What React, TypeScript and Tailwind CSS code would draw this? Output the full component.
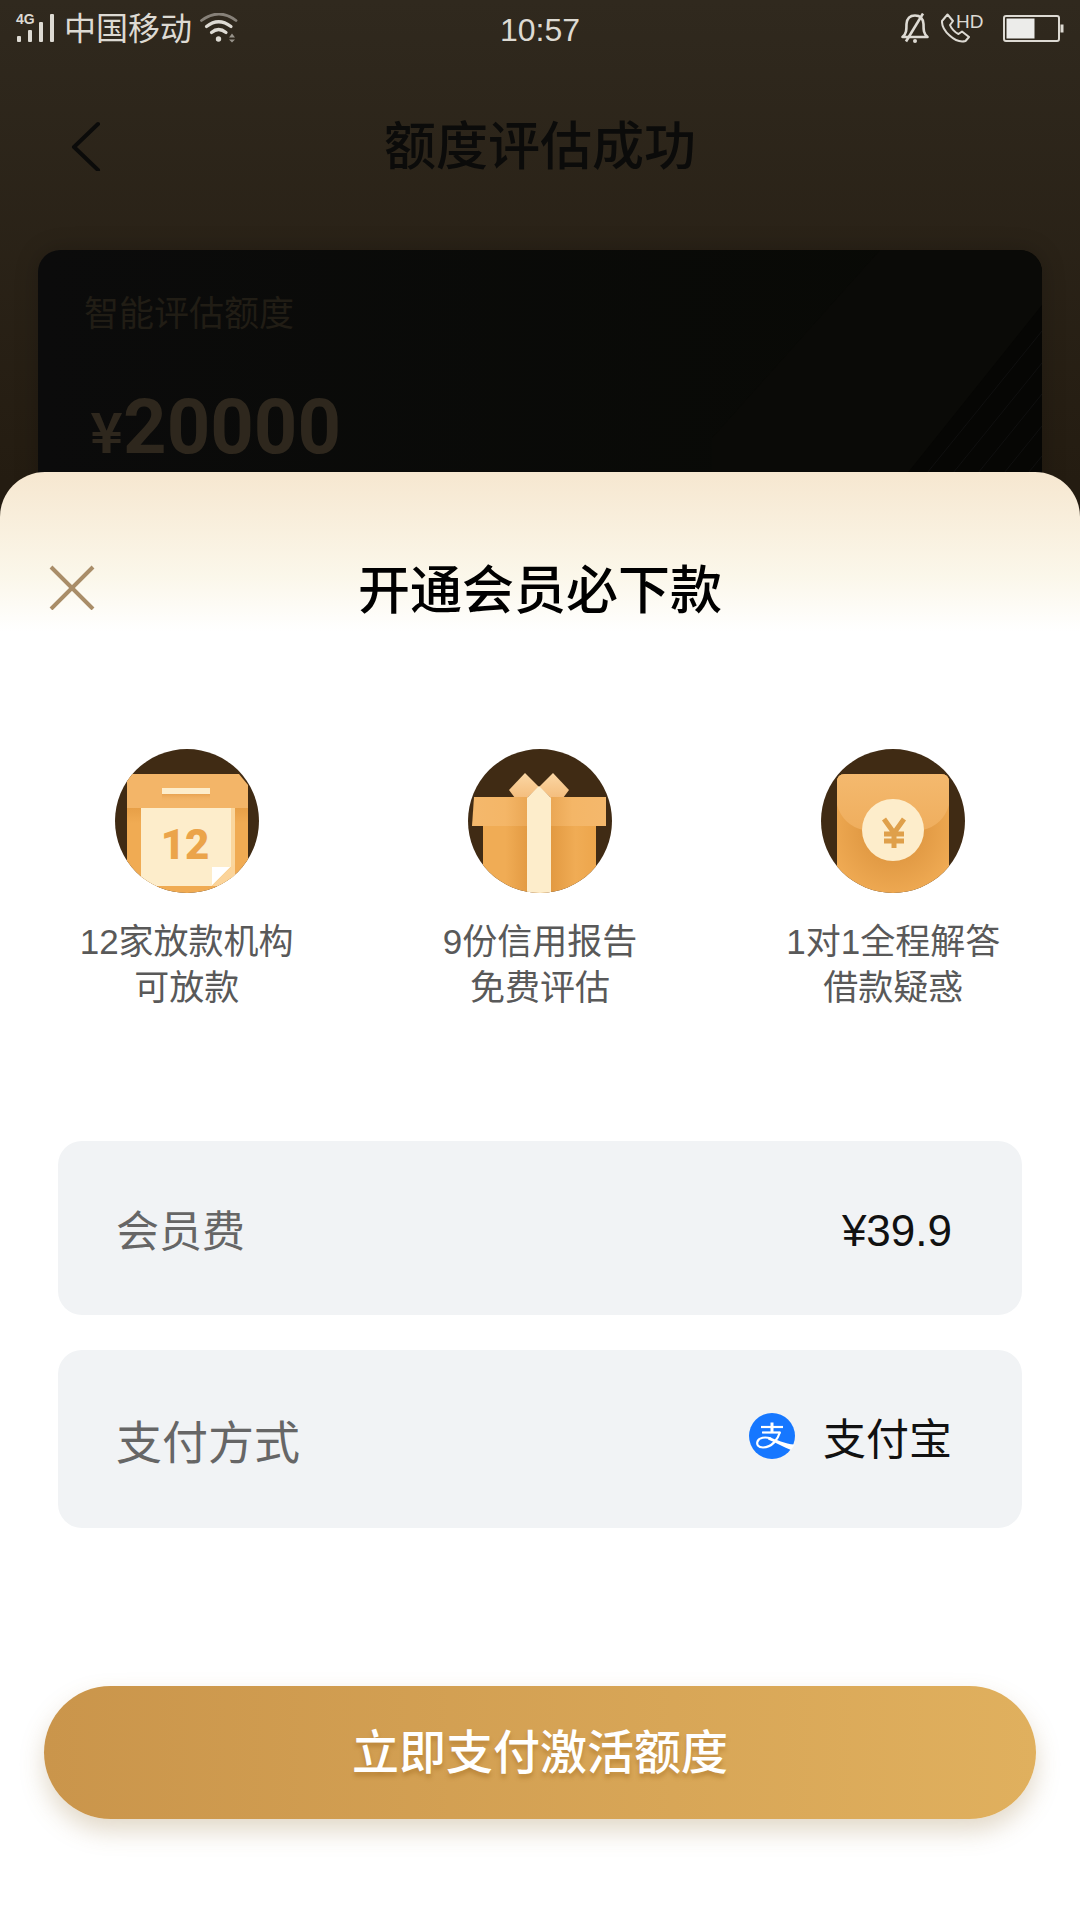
import type { ReactNode } from 'react';

type Benefit = {
  icon: ReactNode;
  lines: [string, string];
};

function SignalIcon() {
  return (
    <div className="relative h-[30px] w-[40px]">
      <span className="absolute -top-px left-0 font-['Liberation_Sans',sans-serif] text-[14px] leading-[14px] font-bold">4G</span>
      <svg width="40" height="30" viewBox="0 0 40 30" fill="currentColor" aria-hidden="true">
        <rect x="1" y="23" width="4" height="6" rx="1" />
        <rect x="12" y="17" width="4" height="12" rx="1" />
        <rect x="23" y="9" width="4" height="20" rx="1" />
        <rect x="34" y="1" width="4" height="28" rx="1" />
      </svg>
    </div>
  );
}

function WifiIcon() {
  return (
    <svg width="38" height="30" viewBox="0 0 38 30" fill="none" stroke="currentColor" strokeLinecap="round" aria-hidden="true">
      <path d="M1.5 7.500 Q19 -5.500 36 7.500" strokeWidth="2.800" opacity="0.5" />
      <path d="M6.500 13.500 Q18.500 4 31 13.500" strokeWidth="3.200" />
      <path d="M11.500 19.500 Q18.500 13.500 26 19.500" strokeWidth="3.200" />
      <circle cx="18.500" cy="26" r="2.700" fill="currentColor" stroke="none" />
      <path d="M29 24.500 L32 20.500 L35 24.500Z M29 26.500 H35 L32 29.500Z" fill="currentColor" stroke="none" opacity="0.6" />
    </svg>
  );
}

function MutedBellIcon() {
  return (
    <svg width="28" height="30" viewBox="0 0 28 30" fill="none" stroke="currentColor" strokeWidth="2.600" strokeLinejoin="round" aria-hidden="true">
      <path d="M1.500 24 H26.500 C22.500 20.500 22.500 17 22.500 11 C22 5 18.500 2.500 14 2.500 C9.500 2.500 6 5 5.500 11 C5.500 17 5.500 20.500 1.500 24 Z" />
      <path d="M22 0.500 L5 28.500" />
      <circle cx="14" cy="28" r="2" fill="currentColor" stroke="none" />
    </svg>
  );
}

function HdCallIcon() {
  return (
    <div className="relative h-[30px] w-[42px]">
      <svg width="30" height="30" viewBox="0 0 30 30" fill="none" stroke="currentColor" strokeWidth="2" strokeLinejoin="round" aria-hidden="true">
        <path d="M6.500 1.500 L12 8 L9 12 C10 15 14 19.500 17.500 21 L21 18.500 L28 24 L24.500 28 C14 31 0.500 17 1 8 Z" />
      </svg>
      <span className="absolute top-0 left-[15px] font-['Liberation_Sans',sans-serif] text-[19px] leading-[18px]">HD</span>
    </div>
  );
}

function BatteryIcon() {
  return (
    <svg width="61" height="27" viewBox="0 0 61 27" fill="none" aria-hidden="true">
      <rect x="1" y="1" width="55" height="25" rx="2" stroke="currentColor" strokeWidth="2" />
      <rect x="3.500" y="3.500" width="28" height="20" fill="#ececea" />
      <rect x="57.500" y="9.500" width="3" height="8" fill="currentColor" />
    </svg>
  );
}

function StatusBar() {
  return (
    <div className="grid h-14 grid-cols-[1fr_auto_1fr] items-center px-4 text-[#dddad3]">
      <div className="flex items-center gap-2">
        <SignalIcon />
        <span className="pb-1 text-[32px] leading-[48px]">中国移动</span>
        <WifiIcon />
      </div>
      <span className="pt-1 font-['Liberation_Sans',sans-serif] text-[32px] leading-[48px]">10:57</span>
      <div className="flex items-center justify-end gap-3">
        <MutedBellIcon />
        <HdCallIcon />
        <div className="ml-2">
          <BatteryIcon />
        </div>
      </div>
    </div>
  );
}

function QuotaCard() {
  return (
    <section className="relative mx-[38px] h-[270px] overflow-hidden rounded-t-[22px] bg-linear-to-r from-[#0b0b0b] to-[#080905] pt-[37px] pl-[46px] shadow-[0_0_24px_rgba(0,0,0,0.2)]">
      <svg className="absolute top-0 right-0" width="330" height="270" viewBox="0 0 330 270" aria-hidden="true">
        <path d="M168 0 H330 V270 H0 V188 Z" fill="#0a0a07" />
        <path d="M330 55 L158 270 H330 Z" fill="#060604" />
        <g stroke="#101010" strokeWidth="1" fill="none">
          <path d="M330 81 L177 270" />
          <path d="M330 113 L203 270" />
          <path d="M330 144 L228 270" />
          <path d="M330 176 L254 270" />
          <path d="M330 206 L278 270" />
        </g>
      </svg>
      <p className="relative text-[35px] leading-[48px] text-[#211d15]">智能评估额度</p>
      <p className="relative mt-[52px] flex items-baseline pl-1.5 text-[#2e271d]">
        <span className="text-[56px] leading-[56px] font-bold">¥</span>
        <span className="font-[Roboto,sans-serif] text-[76px] leading-[80px] font-bold">20000</span>
      </p>
    </section>
  );
}

function CalendarIcon() {
  return (
    <svg width="144" height="144" viewBox="0 0 144 144" aria-hidden="true">
      <defs>
        <clipPath id="calendar-clip">
          <circle cx="72" cy="72" r="72" />
        </clipPath>
        <linearGradient id="calendar-body" x1="0" y1="0" x2="0" y2="1">
          <stop offset="0" stopColor="#e59d45" />
          <stop offset="0.2" stopColor="#f0ab53" />
          <stop offset="1" stopColor="#f0ab53" />
        </linearGradient>
        <linearGradient id="calendar-slot" x1="0" y1="0" x2="0" y2="1">
          <stop offset="0" stopColor="#e8a352" />
          <stop offset="1" stopColor="#f4b769" stopOpacity="0" />
        </linearGradient>
      </defs>
      <g clipPath="url(#calendar-clip)">
        <rect width="144" height="144" fill="#402b14" />
        <rect x="12" y="56" width="121" height="90" fill="url(#calendar-body)" />
        <path d="M12 25 H124 L133 36 V59 H12 Z" fill="#f3b568" />
        <rect x="47" y="45" width="48" height="8" fill="url(#calendar-slot)" />
        <rect x="47" y="39" width="48" height="6" fill="#fdedcb" />
        <rect x="116" y="59" width="4" height="77" fill="#fad69d" />
        <path d="M26 59 H116 V118 L97 137 H26 Z" fill="#fdedcb" />
        <path d="M116 118 L97 137 H112 L120 128 V115 Z" fill="#fbd49a" />
        <path d="M97 118 H115 L97 136 Z" fill="#ffffff" />
        <text x="70" y="110" textAnchor="middle" fontFamily="Roboto, sans-serif" fontWeight="900" fontSize="42" fill="#eba44a">
          12
        </text>
      </g>
    </svg>
  );
}

function GiftIcon() {
  return (
    <svg width="144" height="144" viewBox="0 0 144 144" aria-hidden="true">
      <defs>
        <clipPath id="gift-clip">
          <circle cx="72" cy="72" r="72" />
        </clipPath>
        <linearGradient id="gift-body" x1="0" y1="0" x2="1" y2="0">
          <stop offset="0" stopColor="#f0ac55" />
          <stop offset="0.2" stopColor="#f0ac55" />
          <stop offset="0.5" stopColor="#dc9138" />
          <stop offset="0.82" stopColor="#f0ac55" />
          <stop offset="1" stopColor="#eda64c" />
        </linearGradient>
        <linearGradient id="gift-lid" x1="0" y1="0" x2="1" y2="0">
          <stop offset="0" stopColor="#f4b86c" />
          <stop offset="0.25" stopColor="#f4b667" />
          <stop offset="0.5" stopColor="#e59f4b" />
          <stop offset="0.75" stopColor="#f4b667" />
          <stop offset="1" stopColor="#f4b86c" />
        </linearGradient>
        <linearGradient id="gift-bow" x1="0" y1="0" x2="0" y2="1">
          <stop offset="0" stopColor="#fbd7a4" />
          <stop offset="1" stopColor="#f4bd7d" />
        </linearGradient>
      </defs>
      <g clipPath="url(#gift-clip)">
        <rect width="144" height="144" fill="#402b14" />
        <rect x="15" y="76" width="113" height="70" fill="url(#gift-body)" />
        <path d="M57 24 L71 38 L59 49 H47 L41 41 Z" fill="url(#gift-bow)" />
        <path d="M85 24 L71 38 L83 49 H95 L101 41 Z" fill="url(#gift-bow)" />
        <path d="M6 48 H138 V77 H4 Z" fill="url(#gift-lid)" />
        <path d="M59 49 L71 37 L83 49 V144 H59 Z" fill="#fdedcb" />
      </g>
    </svg>
  );
}

function RedPacketIcon() {
  return (
    <svg width="144" height="144" viewBox="0 0 144 144" aria-hidden="true">
      <defs>
        <clipPath id="packet-clip">
          <circle cx="72" cy="72" r="72" />
        </clipPath>
        <radialGradient id="packet-body" cx="0.5" cy="0.45" r="0.6">
          <stop offset="0" stopColor="#d68d38" />
          <stop offset="0.5" stopColor="#e39c46" />
          <stop offset="1" stopColor="#f0ab54" />
        </radialGradient>
        <linearGradient id="packet-flap" x1="0" y1="0" x2="0" y2="1">
          <stop offset="0" stopColor="#f4b96e" />
          <stop offset="1" stopColor="#efae5e" />
        </linearGradient>
      </defs>
      <g clipPath="url(#packet-clip)">
        <rect width="144" height="144" fill="#402b14" />
        <path d="M16 33 Q16 25 24 25 H120 Q128 25 128 33 V146 H16 Z" fill="url(#packet-body)" />
        <path d="M16 33 Q16 25 24 25 H120 Q128 25 128 33 V56 Q122 76 102 81 H42 Q22 76 16 56 Z" fill="url(#packet-flap)" />
        <circle cx="72" cy="81" r="31" fill="#fdedcb" />
        <path
          d="M63 70 L73 84 L83 70 M73 84 V99 M63 85 H83 M63 92 H83"
          fill="none"
          stroke="#dfa04b"
          strokeWidth="5"
        />
      </g>
    </svg>
  );
}

function AlipayLogo() {
  return (
    <svg width="46" height="46" viewBox="0 0 46 46" fill="none" aria-hidden="true">
      <circle cx="23" cy="23" r="23" fill="#1677ff" />
      <g stroke="#ffffff" strokeWidth="2.200">
        <path d="M12 14 H34" />
        <path d="M13 19.500 H31.500" />
        <path d="M23 9.500 V19.500" strokeWidth="3" />
        <path d="M31 19 C29 26 23 34.500 14 34.500 C9 34.500 7.500 31.500 8.500 28.500 C10 24.500 16 23.500 22 25.500" />
      </g>
      <path d="M20 24 C27 26.500 36 31 45.500 31.500 A23 23 0 0 1 42 37 C34 34 27 29.500 19 26.500 Z" fill="#ffffff" />
    </svg>
  );
}

const benefits: Benefit[] = [
  { icon: <CalendarIcon />, lines: ['12家放款机构', '可放款'] },
  { icon: <GiftIcon />, lines: ['9份信用报告', '免费评估'] },
  { icon: <RedPacketIcon />, lines: ['1对1全程解答', '借款疑惑'] },
];

function MemberSheet() {
  return (
    <section className="relative -mt-12 flex-1 rounded-t-[45px] bg-white bg-linear-to-b from-[#f6e7d0] via-[#fbf7ea] via-[104px] to-white to-[160px] pt-[83px] pb-[100px]">
      <div className="grid grid-cols-[1fr_auto_1fr] items-center px-[49px]">
        <button type="button" aria-label="关闭" className="w-[46px] cursor-pointer">
          <svg width="46" height="46" viewBox="0 0 46 46" stroke="#a98d68" strokeWidth="4" aria-hidden="true">
            <path d="M2 3 L44 45 M44 3 L2 45" />
          </svg>
        </button>
        <h2 className="text-[52px] leading-[64px] font-medium text-black">开通会员必下款</h2>
      </div>

      {/* Benefits */}
      <ul className="mt-[130px] grid grid-cols-3 px-2.5">
        {benefits.map((b) => (
          <li key={b.lines[0]} className="flex flex-col items-center">
            {b.icon}
            <p className="mt-[26px] text-center font-['Liberation_Sans','Noto_Sans_CJK_SC',sans-serif] text-[35px] leading-[46px] text-[#595959]">
              {b.lines[0]}
              <br />
              {b.lines[1]}
            </p>
          </li>
        ))}
      </ul>

      {/* Fee and pay method */}
      <dl className="mx-[58px] mt-[130px] flex flex-col gap-[35px]">
        <div className="flex h-[174px] items-center justify-between rounded-3xl bg-[#f1f3f5] pr-[70px] pl-[58px]">
          <dt className="text-[43px] leading-[60px] text-[#666666]">会员费</dt>
          <dd className="pt-1.5 font-['Liberation_Sans',sans-serif] text-[44px] leading-[60px] text-[#111111]">¥39.9</dd>
        </div>
        <div className="flex h-[178px] items-center justify-between rounded-3xl bg-[#f1f3f5] pr-[70px] pl-[58px]">
          <dt className="text-[46px] leading-[60px] text-[#666666]">支付方式</dt>
          <dd className="flex items-center gap-7 pb-1.5 text-[43px] leading-[60px] text-[#111111]">
            <AlipayLogo />
            支付宝
          </dd>
        </div>
      </dl>

      <div className="mt-[158px] px-[44px]">
        <button
          type="button"
          className="h-[133px] w-full cursor-pointer rounded-full bg-linear-to-r from-[#ca954b] to-[#e0b05e] pb-2 text-[47px] leading-[64px] font-medium text-white shadow-[0_12px_24px_rgba(150,120,60,0.28)] text-shadow-[0_4px_4px_rgba(150,95,20,0.4)]"
        >
          立即支付激活额度
        </button>
      </div>
    </section>
  );
}

export default function App() {
  return (
    <main className="flex min-h-screen flex-col bg-[#241c11] bg-linear-to-b from-[#30291e] to-[#241c11] to-[480px] font-['Noto_Sans_CJK_SC',sans-serif]">
      <StatusBar />
      <header className="mb-5 grid h-[174px] grid-cols-[1fr_auto_1fr] items-center px-[71px]">
        <button type="button" aria-label="返回" className="w-[30px] cursor-pointer">
          <svg width="30" height="56" viewBox="0 0 30 56" fill="none" stroke="#0b0b0a" strokeWidth="4" strokeLinecap="round" strokeLinejoin="round" aria-hidden="true">
            <path d="M27 9 L3 32 L27 55" />
          </svg>
        </button>
        <h1 className="text-[52px] leading-[64px] font-medium text-[#0b0b0a]">额度评估成功</h1>
      </header>
      <QuotaCard />
      <MemberSheet />
    </main>
  );
}
